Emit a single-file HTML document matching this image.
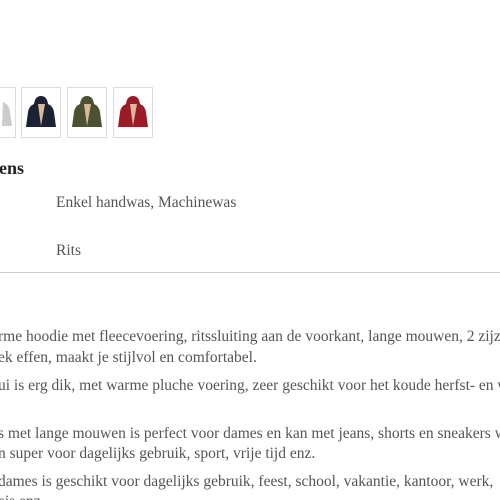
<!DOCTYPE html>
<html><head><style>
html,body{margin:0;width:500px;height:500px;overflow:hidden}
body{background:#fff;position:relative;font-family:"Liberation Serif",serif;color:#555}
#w{position:absolute;left:0;top:0;width:500px;height:500px;overflow:hidden}
.t{position:absolute;border:1px solid #ddd;width:38px;height:49px;top:87px;background:#fff}
.p{position:absolute;white-space:nowrap;font-size:15.5px;left:-2px}
</style></head><body><div id="w">
<div class="t" style="left:-24px"><svg width="38" height="49"><path d="M26 14 q6 2 7 10 l2 14 h-10z" fill="#ccc"/></svg></div>
<div class="t" style="left:21px"><svg width="38" height="49"><path d="M19 8 q-6 0-7 8 q-5 2-6 8 l-2 15 h30 l-2-15 q-1-6-6-8 q-1-8-7-8z" fill="#1c2233"/><path d="M16 16 l3 22 l4-22z" fill="#d9b999"/></svg></div>
<div class="t" style="left:67px"><svg width="38" height="49"><path d="M19 8 q-6 0-7 8 q-5 2-6 8 l-2 15 h30 l-2-15 q-1-6-6-8 q-1-8-7-8z" fill="#4a5232"/><path d="M16 16 l3 22 l4-22z" fill="#d9b999"/></svg></div>
<div class="t" style="left:113px"><svg width="38" height="49"><path d="M19 8 q-6 0-7 8 q-5 2-6 8 l-2 15 h30 l-2-15 q-1-6-6-8 q-1-8-7-8z" fill="#9b1c28"/><path d="M16 16 l3 22 l4-22z" fill="#d9b999"/></svg></div>
<div style="position:absolute;left:-1px;top:158px;font-size:18px;font-weight:bold;color:#222">ens</div>
<div style="position:absolute;left:56px;top:194px;font-size:15.5px">Enkel handwas, Machinewas</div>
<div style="position:absolute;left:56px;top:242px;font-size:15.5px">Rits</div>
<div style="position:absolute;left:0;top:272px;width:500px;height:1px;background:#ccc"></div>
<div class="p" style="top:328px">rme hoodie met fleecevoering, ritssluiting aan de voorkant, lange mouwen, 2 zijzakken</div>
<div class="p" style="top:349px">ek effen, maakt je stijlvol en comfortabel.</div>
<div class="p" style="top:377px">ui is erg dik, met warme pluche voering, zeer geschikt voor het koude herfst- en winterweer</div>
<div class="p" style="top:425px">s met lange mouwen is perfect voor dames en kan met jeans, shorts en sneakers worden</div>
<div class="p" style="top:445px">n super voor dagelijks gebruik, sport, vrije tijd enz.</div>
<div class="p" style="top:473px">dames is geschikt voor dagelijks gebruik, feest, school, vakantie, kantoor, werk,</div>
<div class="p" style="top:493px">eis enz.</div>
</div></body></html>
